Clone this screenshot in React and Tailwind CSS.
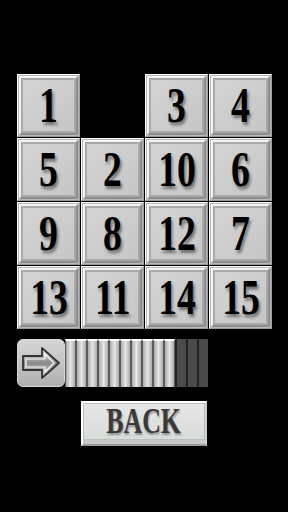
import React from "react";

const tiles = [1, null, 3, 4, 5, 2, 10, 6, 9, 8, 12, 7, 13, 11, 14, 15];

function Tile({ n }) {
  if (n === null) return <div className="w-[63px] h-[63px]" />;
  return (
    <div className="w-[63px] h-[63px] border border-t-white border-l-white border-r-[#9a9a9a] border-b-[#9a9a9a] bg-[#b8b8b8] p-px">
      <div className="w-full h-full border-2 border-t-[#f4f4f4] border-l-[#f4f4f4] border-r-[#8c8c8c] border-b-[#8c8c8c] bg-[#a9a9a9] p-[2px]">
        <div className="w-full h-full bg-[linear-gradient(135deg,#d4d4d4,#c6c6c6)] flex items-center justify-center">
          <span className="font-['Liberation_Serif',serif] font-bold text-[46px] leading-[46px] text-black scale-x-[0.82] scale-y-[1.08] [text-shadow:2px_3px_3px_rgba(0,0,0,0.45)]">
            {n}
          </span>
        </div>
      </div>
    </div>
  );
}

function Arrow() {
  return (
    <svg width="40" height="34" viewBox="0 0 40 34">
      <defs>
        <linearGradient id="ag" x1="0" y1="0" x2="0" y2="1">
          <stop offset="0" stopColor="#f0f0f0" />
          <stop offset="0.5" stopColor="#8a8a8a" />
          <stop offset="1" stopColor="#d8d8d8" />
        </linearGradient>
      </defs>
      <path
        d="M2 10 H21 V2 L38 17 L21 32 V24 H2 Z"
        fill="url(#ag)"
        stroke="#333"
        strokeWidth="1.8"
        strokeLinejoin="round"
      />
      <path d="M5 13 H24 V8 L33 17 L24 26 V21 H5 Z" fill="none" stroke="#f8f8f8" strokeWidth="1.2" />
    </svg>
  );
}

export default function App() {
  const segs = Array.from({ length: 13 }, (_, i) => i < 10);
  return (
    <div className="w-[288px] h-[512px] bg-black flex flex-col">
      {/* Board */}
      <div className="mt-[74px] ml-[17px] grid grid-cols-[repeat(4,63px)] gap-px">
        {tiles.map((n, i) => (
          <Tile key={i} n={n} />
        ))}
      </div>

      {/* Progress bar */}
      <div className="mt-[10px] ml-[17px] flex h-[48px]">
        <div className="w-[48px] h-full rounded-[6px] border border-[#d8d8d8] bg-[linear-gradient(180deg,#d6d6d6,#b0b0b0)] flex items-center justify-center">
          <Arrow />
        </div>
        {segs.map((lit, i) =>
          lit ? (
            <div
              key={i}
              className="w-[11px] h-full border-x border-x-[#5a5a5a] border-t-2 border-t-white bg-[linear-gradient(90deg,#aaaaaa,#e6e6e6_50%,#aaaaaa)]"
            />
          ) : (
            <div key={i} className="w-[11px] h-full border-l-2 border-l-[#222] bg-[#4a4a4a]" />
          )
        )}
      </div>

      {/* Back button */}
      <div className="mt-[14px] ml-[81px] w-[126px] h-[45px] border-2 border-t-white border-l-white border-r-[#cfcfcf] border-b-[#9a9a9a] bg-[#c8c8c8] pb-[4px]">
        <div className="w-full h-full bg-[linear-gradient(180deg,#e6e6e6,#d8dcd8)] border border-[#bdbdbd] flex items-center justify-center">
          <span className="font-['Liberation_Serif',serif] font-bold text-[35px] leading-[35px] text-[#3a3a3a] scale-x-[0.74] [text-shadow:1px_2px_2px_rgba(0,0,0,0.35)]">
            BACK
          </span>
        </div>
      </div>
    </div>
  );
}
